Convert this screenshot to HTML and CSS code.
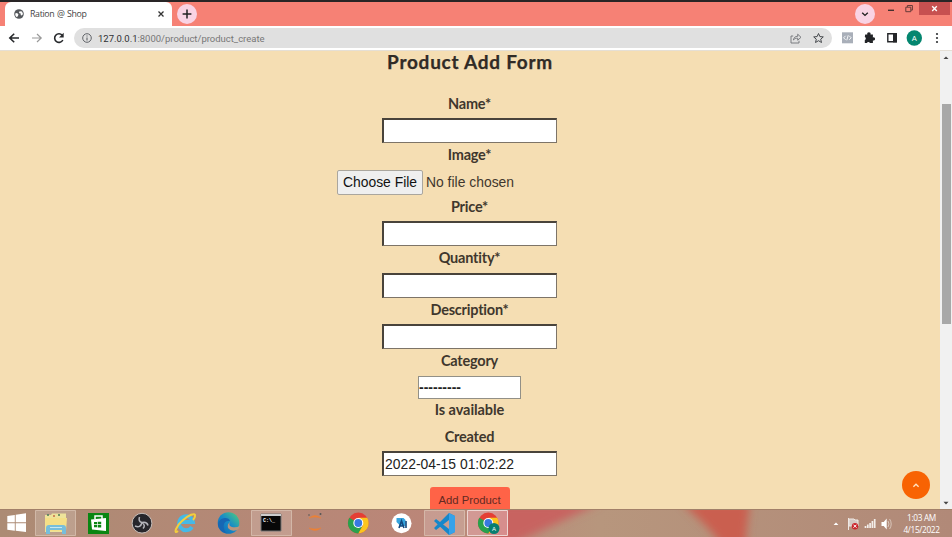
FILE: index.html
```
<!DOCTYPE html>
<html lang="en">
<head>
<meta charset="utf-8">
<title>Ration @ Shop</title>
<link rel="stylesheet" href="styles.css">
</head>
<body>
<div class="screen">
  <header class="tabs">
    <div class="tab">
      <svg class="globe" viewBox="0 0 10 10"><circle cx="5" cy="5" r="4.8" fill="#55585c"/><path d="M1.2 4.500 3 4l1.400 1.200L4 7 2.700 8.300 1.400 6.500zM5.500 2.200 8 2.500 9 5 7.800 6.600 6.500 6 7 4.800 5 4z" fill="#fff"/></svg>
      <span class="tab-title">Ration @ Shop</span>
      <svg class="close" viewBox="0 0 6 6"><path d="m.5.5 5 5m0-5-5 5" stroke="#333" stroke-width="1.3"/></svg>
    </div>
    <div class="round"><svg viewBox="0 0 20 20"><path d="M10 5.6v8.8M5.6 10h8.8" stroke="#222" stroke-width="1.5"/></svg></div>
    <div class="round search"><svg viewBox="0 0 20 20"><path d="m7.2 8.8 2.8 2.6 2.8-2.6" fill="none" stroke="#222" stroke-width="1.4"/></svg></div>
    <svg class="window-buttons" viewBox="0 0 70 15"><path d="M6 8.3h6" stroke="#472f2e" stroke-width="1.4"/><path d="M23.800 5.200h5v4.500h-5zM25.400 5V3.500h5v4.600h-1.400" fill="none" stroke="#673b38"/><path d="M37 0h31v13H37z" fill="#c75050"/><path d="m50.200 4.300 4.600 4.600m0-4.600-4.600 4.600" stroke="#fff" stroke-width="1.4"/></svg>
  </header>
  <div class="toolbar">
    <svg class="nav" viewBox="0 0 74 24"><g fill="none" stroke="#26282b" stroke-width="1.6"><path d="M19 12H10m4.200-4.300L9.800 12l4.400 4.300"/><path d="M32 12h9m-4-4 4.200 4L37 16" stroke="#999" stroke-width="1.2"/><path d="M62.200 9.200A4.300 4.300 0 1 0 62.800 14"/></g><path d="M63.700 6.800v4.700H59z" fill="#26282b"/></svg>
    <div class="address">
      <svg class="info" viewBox="0 0 10 10"><circle cx="5" cy="5" r="4.3" fill="none" stroke="#606368"/><path d="M5 4.500v3M5 2.400v1.100" stroke="#606368" stroke-width="1.1"/></svg>
      <span class="url"><b>127.0.0.1</b>:8000/product/product_create</span>
      <svg class="address-icons" viewBox="0 0 36 12"><g fill="none" stroke="#707377"><path d="M3.200 4H1v7h8V8.800M3.400 8C4 5.300 5.200 4.400 7.700 4.300V2.200L11 5.300 7.700 8.200V6.200C5.600 6.200 4.700 6.600 3.400 8z" stroke-width=".9"/><path d="m28.500 1.500 1.400 3.100 3.400.3-2.600 2.300.8 3.300-3-1.800-3 1.800.8-3.300-2.600-2.300 3.400-.3z" stroke="#45484c"/></g></svg>
    </div>
    <svg class="extensions" viewBox="0 0 120 24"><path d="M10 6.300h11v11h-11z" fill="#a9afb9"/><path d="m13.600 9.800-2 2 2 2m3.600-4 2 2-2 2m-1-4.500-1.400 5" fill="none" stroke="#fff" stroke-width=".9"/><path d="M33.200 8.400h2.100a1.700 1.700 0 1 1 3.200 0h2.400v3a1.600 1.600 0 1 1 0 3v2.600h-3a1.600 1.600 0 0 0-3 0h-2.100v-3a1.600 1.600 0 0 0 0-3z" fill="#222427"/><path d="M55.800 7.700h8.400v8h-8.400z" fill="#fff" stroke="#242629" stroke-width="1.400"/><path d="M61 7h4v9.400h-4z" fill="#242629"/><circle cx="82.300" cy="12" r="7.700" fill="#04866f"/><g fill="#303235"><circle cx="105" cy="8" r="1.100"/><circle cx="105" cy="12" r="1.100"/><circle cx="105" cy="16" r="1.100"/></g><text x="82.300" y="14.700" class="avatar">A</text></svg>
  </div>
  <div class="viewport">
    <main>
      <h1>Product Add Form</h1>
      <form>
        <div class="field"><label for="name">Name*</label><input id="name"></div>
        <div class="field"><label>Image*</label><div class="file"><button type="button">Choose File</button><span>No file chosen</span></div></div>
        <div class="field"><label for="price">Price*</label><input id="price"></div>
        <div class="field"><label for="quantity">Quantity*</label><input id="quantity"></div>
        <div class="field"><label for="description">Description*</label><input id="description"></div>
        <div class="field category"><label>Category</label><div class="select">---------</div></div>
        <label class="available">Is available</label>
        <div class="field"><label for="created">Created</label><input id="created" value="2022-04-15 01:02:22"></div>
        <button class="submit" type="button">Add Product</button>
      </form>
      <button class="to-top" type="button" aria-label="Back to top"><svg viewBox="0 0 28 28"><path d="m11.400 15.700 2.600-2.500 2.600 2.500" fill="none" stroke="#ffe4c4" stroke-width="1.300"/></svg></button>
    </main>
    <div class="scrollbar"><svg viewBox="0 0 12 12"><path d="m3.500 8 2.500-2.600L8.500 8z" fill="#444"/></svg><div class="thumb"></div><svg class="down" viewBox="0 0 12 12"><path d="m3.500 4.800 2.500 2.600 2.500-2.600z" fill="#444"/></svg></div>
  </div>
  <footer>
    <svg class="taskbar" viewBox="0 0 952 28">
      <defs>
        <filter id="soft" x="-20%" y="-50%" width="140%" height="200%"><feGaussianBlur stdDeviation="4"/></filter>
        <linearGradient id="base"><stop stop-color="#ac8b74"/><stop offset=".45" stop-color="#bb8678"/><stop offset=".63" stop-color="#b7967d"/><stop offset="1" stop-color="#b18978"/></linearGradient>
        <linearGradient id="edge" x1="0" y1="1" x2="1" y2="0"><stop stop-color="#1265ad"/><stop offset=".5" stop-color="#168bc9"/><stop offset="1" stop-color="#55d178"/></linearGradient>
      </defs>
      <path d="M0 0h952v28H0z" fill="url(#base)"/>
      <path d="M500-6h100C570 8 545 20 510 36H490z" fill="#c86460" filter="url(#soft)"/>
      <path d="M682-6h68l-3 24-2 20h-22C710 18 694 6 682-6z" fill="#ca5f50" filter="url(#soft)"/>
      <path d="M0 .5h952" stroke="#a28069"/>
      <path d="m7.300 7 7.500-1v7.300H7.300zM15.700 5.800 26 4.300v9H15.700zM7.300 14.300h7.500v7.400l-7.500-1zM15.700 14.300H26V23l-10.300-1.300z" fill="#fff"/>
      <g fill="#fff" fill-opacity=".18" stroke="#ddc7b8" stroke-opacity=".7"><path d="M35.500 1.500h40v25h-40zM251.500 1.500h40v25h-40zM424.500 1.500h40v25h-40z"/></g>
      <path d="M467.500 1.500h40v25h-40z" fill="#dda0a0" fill-opacity=".7" stroke="#edd6d3"/>
      <path d="M45 6h6l1-1.500h14V23H45z" fill="#eee39a"/><path d="M45 9h22l-1 13H46z" fill="#f5df86"/><path d="M47 6h2m9 0h2" stroke="#497d55" stroke-width="1.500"/><path d="M53 7h2" stroke="#c66b42" stroke-width="1.500"/><path d="M46 25v-6q0-3 3-3h14q3 0 3 3v6h-4v-4H50v4z" fill="#77bedb"/><path d="M50 18.500h12" stroke="#c7e8f2"/>
      <path d="M88 4h21v21H88z" fill="#098612"/><path d="M91 10.500 106 9v13l-14-1.600z" fill="#fff"/><path d="M95 10V7h7v3" fill="none" stroke="#fff" stroke-width="1.500"/><path d="M94 13h3v2.300h-3zM97.700 12.700h3.500v2.600h-3.500zM94 16h3v2.300h-3zM97.700 16h3.500v2.600h-3.500z" fill="#098612"/>
      <circle cx="142" cy="14.200" r="9.900" fill="#27262b" stroke="#c6beba"/><path d="M139.500 8q-1.500 4.500 2.500 5.500 5-1 6 3M142 13.500q-1.500 6-7 3.500M142 13.500q4 3 1 6" fill="none" stroke="#b5b5bb" stroke-width="1.500"/>
      <path d="M192 18a7 7 0 1 1 1-5h-13" fill="none" stroke="#45b9e7" stroke-width="3.800"/><path d="M178 22c-5 4-2-5 4-10 6-6 14-9 13-5q0 2-2 4" fill="none" stroke="#f3ce3c" stroke-width="2"/>
      <circle cx="228.500" cy="14" r="10.800" fill="url(#edge)"/><path d="M218 15c1-7 11-8 12-3-7-1-8 6-4 12-5-1-8-5-8-9z" fill="#1767b4"/><path d="M230 13q-2 4 2 5 4 1 8-1-1 3-3 4-6 2-9-2-1-4 2-6z" fill="#b9957e"/>
      <path d="M261 5h20v17h-20z" fill="#080808" stroke="#777"/><path d="M261 5h20v2h-20z" fill="#ccc"/><text x="263" y="12.500" class="terminal">C:\_</text>
      <path d="M309 9q6-5 12 0-6-2-12 0zM309 19q6 5 12 0-6 2-12 0z" fill="#ed8134" stroke="#ed8134" stroke-width=".500"/><circle cx="309" cy="6" r=".8" fill="#555"/><circle cx="320.500" cy="5" r="1" fill="#555"/>
      <circle cx="358.300" cy="14" r="10.400" fill="#e53e35"/><path d="M358.300 14 349.300 8.800A10.400 10.400 0 0 0 358.300 24.400l4.500-7.800z" fill="#28a24c"/><path d="M358.300 24.400A10.400 10.400 0 0 0 367.300 8.800h-9l4.500 7.800z" fill="#fbc51e"/><circle cx="358.300" cy="14" r="5" fill="#fff"/><circle cx="358.300" cy="14" r="3.900" fill="#3779df"/>
      <circle cx="401.500" cy="14.300" r="10" fill="#fff"/><path d="M396.500 9h7l2 2v6h-5l-4-4z" fill="#35a4de"/><path d="m399 19 2.500-7 2.500 7m-4-2h3m3-5v7" stroke="#154a7f" stroke-width="1.600" fill="none"/>
      <path d="m449 4 6 3v16l-6 3-15-14 2-2 13 10V11l-13 10-2-2z" fill="#1687ca"/><path d="m449 4 6 3v16l-6 3z" fill="#36a2e9"/>
      <circle cx="488.300" cy="14" r="10.400" fill="#e53e35"/><path d="M488.300 14 479.300 8.800A10.400 10.400 0 0 0 488.300 24.400l4.500-7.800z" fill="#28a24c"/><path d="M488.300 24.400A10.400 10.400 0 0 0 497.300 8.800h-9l4.500 7.800z" fill="#fbc51e"/><circle cx="488.300" cy="14" r="5" fill="#fff"/><circle cx="488.300" cy="14" r="3.900" fill="#3779df"/><circle cx="494" cy="19.500" r="5.500" fill="#087e70"/><text x="494" y="21.800" class="badge">A</text>
      <path d="m833.600 16 2.400-2.600 2.400 2.600z" fill="#fff"/>
      <path d="M848.500 9v12M849 10h5l1 1h3v6h-9z" fill="#d4c9c3" stroke="#eee8e4"/><circle cx="855" cy="17.200" r="3.200" fill="#ca272d"/><path d="m853.500 15.700 3 3m0-3-3 3" stroke="#fff"/>
      <path d="M865.500 19v-2m2.300 2v-3.500m2.300 3.500v-5m2.300 5v-7m2.300 7v-9" stroke="#f3eeea" stroke-width="1.700"/>
      <path d="M881.500 13h2.200l3-3.500v11l-3-3.500h-2.200z" fill="#fff"/><path d="M888 12q2 3 0 6m1.600-8q3.200 5 0 10" fill="none" stroke="#e3d5cc" stroke-width=".8"/>
    </svg>
    <div class="clock"><span>1:03 AM</span><span>4/15/2022</span></div>
  </footer>
</div>
</body>
</html>
```
FILE: styles.css
```
* { box-sizing: border-box; }
body { margin: 0; overflow: hidden; }
svg { display: block; flex: none; }
.screen { width: 952px; height: 537px; display: flex; flex-direction: column; font-family: "Liberation Sans", sans-serif; }
.tabs { height: 26px; flex: none; background: #f68175; border-top: 2px solid #292526; display: flex; align-items: flex-start; }
.tab { width: 167px; height: 24px; margin-left: 5px; border-radius: 6px 6px 0 0; background: #fff; display: flex; align-items: center; padding: 0 8px 0 9px; }
.globe { width: 10px; height: 10px; }
.tab-title { font: 8.8px "Open Sans", sans-serif; letter-spacing: -.33px; word-spacing: .6px; color: #444; margin-left: 6px; margin-top: -1px; flex: 1; white-space: nowrap; }
.close { width: 6px; height: 6px; }
.round { width: 20px; height: 20px; border-radius: 50%; background: #f9d3e4; margin: 2px 0 0 5px; }
.search { margin-left: auto; }
.window-buttons { width: 70px; height: 15px; margin-left: 7px; }
.toolbar { height: 25px; flex: none; display: flex; align-items: center; background: #fff; border-bottom: 1px solid #e5dfd5; }
.nav { width: 74px; height: 24px; }
.address { height: 20px; width: 758px; flex: none; border-radius: 10px; background: #e0e0e0; display: flex; align-items: center; padding: 0 6px 0 8px; }
.info { width: 10px; height: 10px; }
.url { flex: 1; font: 9.5px Roboto, sans-serif; letter-spacing: -.01px; margin-left: 6px; color: #777; }
.url b { font-weight: 400; color: #303134; }
.address-icons { width: 36px; height: 12px; }
.extensions { width: 120px; height: 24px; }
.avatar { font: 7.5px "Liberation Sans", sans-serif; fill: #fff; text-anchor: middle; }
.viewport { height: 458px; flex: none; display: flex; overflow: hidden; }
main { width: 940px; background: #f5deb3; position: relative; overflow: hidden; }
h1 { height: 40.5px; margin: 0; text-align: center; font: 700 19px/22px Lato, sans-serif; color: #302b26; letter-spacing: .74px; -webkit-text-stroke: .25px #302b26; }
form { display: flex; flex-direction: column; align-items: center; color: #3f372d; padding-right: 1px; }
.field { height: 51.6px; display: flex; flex-direction: column; align-items: center; flex: none; }
label { height: 26.6px; flex: none; font: 700 14.5px/23px Lato, sans-serif; letter-spacing: -.22px; }
input { width: 175px; height: 25px; border: 1px solid #777169; border-color: #49433b #7d7468 #7d7468 #49433b; border-width: 2px 1px 1px 2px; background: #fff; padding: 0 1px; font: 13.9px "Liberation Sans", sans-serif; color: #222; border-radius: 0; }
.file { width: 265px; height: 25px; display: flex; align-items: center; gap: 3px; font-size: 13.9px; }
.file button { width: 86px; height: 25px; padding: 0; background: #efefef; border: 1px solid #aaa69e; border-radius: 2px; font: 13.9px "Liberation Sans", sans-serif; color: #111; white-space: nowrap; }
.category { height: 49.4px; }
.select { width: 103px; height: 22.800px; border: 1px solid #929087; background: #fff; color: #222; font: 700 14px/21px "Liberation Sans", sans-serif; padding-left: 0; }
.available { height: 26px; line-height: 21px; letter-spacing: -.08px; }
.submit { width: 80px; height: 27px; margin-top: 10.500px; border: 0; border-radius: 3px; background: #ff6347; color: #642a22; font: 11.3px/25px "Liberation Sans", sans-serif; padding: 0; }
.to-top { position: absolute; width: 28px; height: 28px; right: 10px; bottom: 10px; border: 0; padding: 0; border-radius: 50%; background: #f86303; }
.scrollbar { width: 12px; background: #f1f1f1; display: flex; flex-direction: column; align-items: center; }
.scrollbar svg { width: 12px; height: 12px; }
.thumb { width: 9px; height: 220px; background: #a8a8a8; margin-top: 41px; }
.scrollbar .down { margin-top: auto; }
footer { height: 28px; flex: none; position: relative; }
.taskbar { width: 952px; height: 28px; }
.clock { position: absolute; top: 3px; right: 9px; width: 43px; display: flex; flex-direction: column; align-items: center; color: #fff; font: 8.300px/12px "Open Sans", sans-serif; letter-spacing: -.35px; white-space: nowrap; }
.terminal { font: bold 5px "Liberation Mono", monospace; fill: #fff; }
.badge { font: 6px "Liberation Sans", sans-serif; fill: #fff; text-anchor: middle; }
```
